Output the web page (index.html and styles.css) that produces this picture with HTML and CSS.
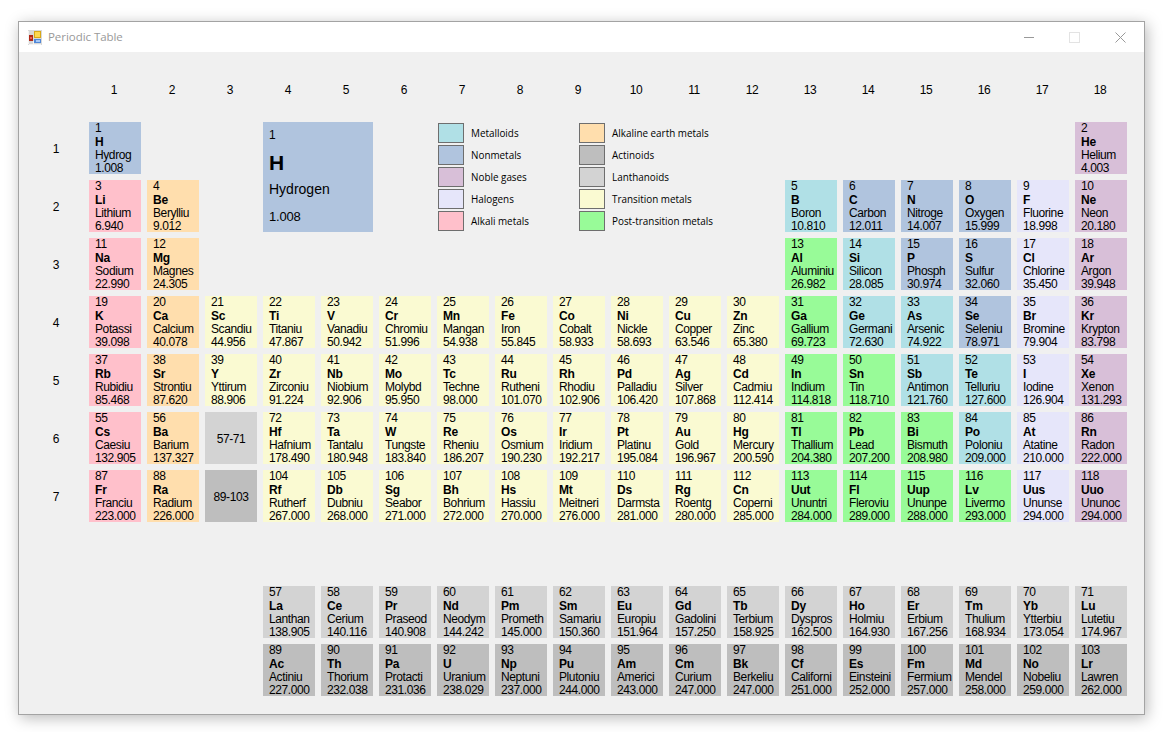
FILE: index.html
```html
<!DOCTYPE html>
<html lang="en">
<head>
	<meta charset="UTF-8">
	<title>Periodic Table</title>
	<link rel="stylesheet" href="styles.css">
</head>
<body>
<div class="window">
	<div class="titlebar">
		<svg class="appicon" width="14" height="15" viewBox="0 0 14 15">
			<rect x="0" y="0" width="14" height="15" fill="#d8d8d8"/>
			<path d="M.5 1v13M5.500 11v3M1 14.500h12" stroke="#f4f4f4" fill="none"/>
			<rect x="6" y="1" width="7" height="7" fill="#d8a818"/>
			<rect x="7" y="2" width="5" height="5" fill="#fcd850"/>
			<rect x="1" y="5" width="4" height="6" fill="#b02818"/>
			<rect x="2" y="7" width="2" height="2" fill="#e86050"/>
			<rect x="6" y="9" width="7" height="4" fill="#5088d8"/>
			<rect x="8" y="10" width="4" height="2" fill="#a8c8f4"/>
		</svg>
		<span class="title">Periodic Table</span>
		<div class="controls">
			<svg width="10" height="10" viewBox="0 0 10 10"><path d="M0 5.5h10" stroke="#999"/></svg>
			<svg width="11" height="11" viewBox="0 0 11 11"><rect x=".5" y=".5" width="10" height="10" fill="none" stroke="#e3e3e3"/></svg>
			<svg width="11" height="11" viewBox="0 0 11 11"><path d="M.5 .5l10 10M10.500 .5l-10 10" stroke="#999"/></svg>
		</div>
	</div>
	<div class="table">
		<div class="hd c2">1</div><div class="hd">2</div><div class="hd">3</div><div class="hd">4</div><div class="hd">5</div><div class="hd">6</div><div class="hd">7</div><div class="hd">8</div><div class="hd">9</div><div class="hd">10</div><div class="hd">11</div><div class="hd">12</div><div class="hd">13</div><div class="hd">14</div><div class="hd">15</div><div class="hd">16</div><div class="hd">17</div><div class="hd">18</div>

		<div class="big nm"><span>1</span><b>H</b><span class="bigname">Hydrogen</span><span class="bigmass">1.008</span></div>

		<div class="legend">
			<ul class="leglist">
				<li><i class="mo"></i>Metalloids</li>
				<li><i class="nm"></i>Nonmetals</li>
				<li><i class="ng"></i>Noble gases</li>
				<li><i class="ha"></i>Halogens</li>
				<li><i class="am"></i>Alkali metals</li>
			</ul>
			<ul class="leglist">
				<li><i class="ae"></i>Alkaline earth metals</li>
				<li><i class="ac"></i>Actinoids</li>
				<li><i class="la"></i>Lanthanoids</li>
				<li><i class="tm"></i>Transition metals</li>
				<li><i class="pt"></i>Post-transition metals</li>
			</ul>
		</div>

		<div class="rl">1</div>
		<div class="el nm"><span>1</span><b>H</b><span>Hydrog</span><span>1.008</span></div>
		<div class="el ng c19"><span>2</span><b>He</b><span>Helium</span><span>4.003</span></div>

		<div class="rl">2</div>
		<div class="el am"><span>3</span><b>Li</b><span>Lithium</span><span>6.940</span></div>
		<div class="el ae"><span>4</span><b>Be</b><span>Berylliu</span><span>9.012</span></div>
		<div class="el mo c14"><span>5</span><b>B</b><span>Boron</span><span>10.810</span></div>
		<div class="el nm"><span>6</span><b>C</b><span>Carbon</span><span>12.011</span></div>
		<div class="el nm"><span>7</span><b>N</b><span>Nitroge</span><span>14.007</span></div>
		<div class="el nm"><span>8</span><b>O</b><span>Oxygen</span><span>15.999</span></div>
		<div class="el ha"><span>9</span><b>F</b><span>Fluorine</span><span>18.998</span></div>
		<div class="el ng"><span>10</span><b>Ne</b><span>Neon</span><span>20.180</span></div>

		<div class="rl">3</div>
		<div class="el am"><span>11</span><b>Na</b><span>Sodium</span><span>22.990</span></div>
		<div class="el ae"><span>12</span><b>Mg</b><span>Magnes</span><span>24.305</span></div>
		<div class="el pt c14"><span>13</span><b>Al</b><span>Aluminiu</span><span>26.982</span></div>
		<div class="el mo"><span>14</span><b>Si</b><span>Silicon</span><span>28.085</span></div>
		<div class="el nm"><span>15</span><b>P</b><span>Phosph</span><span>30.974</span></div>
		<div class="el nm"><span>16</span><b>S</b><span>Sulfur</span><span>32.060</span></div>
		<div class="el ha"><span>17</span><b>Cl</b><span>Chlorine</span><span>35.450</span></div>
		<div class="el ng"><span>18</span><b>Ar</b><span>Argon</span><span>39.948</span></div>

		<div class="rl">4</div>
		<div class="el am"><span>19</span><b>K</b><span>Potassi</span><span>39.098</span></div>
		<div class="el ae"><span>20</span><b>Ca</b><span>Calcium</span><span>40.078</span></div>
		<div class="el tm"><span>21</span><b>Sc</b><span>Scandiu</span><span>44.956</span></div>
		<div class="el tm"><span>22</span><b>Ti</b><span>Titaniu</span><span>47.867</span></div>
		<div class="el tm"><span>23</span><b>V</b><span>Vanadiu</span><span>50.942</span></div>
		<div class="el tm"><span>24</span><b>Cr</b><span>Chromiu</span><span>51.996</span></div>
		<div class="el tm"><span>25</span><b>Mn</b><span>Mangan</span><span>54.938</span></div>
		<div class="el tm"><span>26</span><b>Fe</b><span>Iron</span><span>55.845</span></div>
		<div class="el tm"><span>27</span><b>Co</b><span>Cobalt</span><span>58.933</span></div>
		<div class="el tm"><span>28</span><b>Ni</b><span>Nickle</span><span>58.693</span></div>
		<div class="el tm"><span>29</span><b>Cu</b><span>Copper</span><span>63.546</span></div>
		<div class="el tm"><span>30</span><b>Zn</b><span>Zinc</span><span>65.380</span></div>
		<div class="el pt"><span>31</span><b>Ga</b><span>Gallium</span><span>69.723</span></div>
		<div class="el mo"><span>32</span><b>Ge</b><span>Germani</span><span>72.630</span></div>
		<div class="el mo"><span>33</span><b>As</b><span>Arsenic</span><span>74.922</span></div>
		<div class="el nm"><span>34</span><b>Se</b><span>Seleniu</span><span>78.971</span></div>
		<div class="el ha"><span>35</span><b>Br</b><span>Bromine</span><span>79.904</span></div>
		<div class="el ng"><span>36</span><b>Kr</b><span>Krypton</span><span>83.798</span></div>

		<div class="rl">5</div>
		<div class="el am"><span>37</span><b>Rb</b><span>Rubidiu</span><span>85.468</span></div>
		<div class="el ae"><span>38</span><b>Sr</b><span>Strontiu</span><span>87.620</span></div>
		<div class="el tm"><span>39</span><b>Y</b><span>Yttirum</span><span>88.906</span></div>
		<div class="el tm"><span>40</span><b>Zr</b><span>Zirconiu</span><span>91.224</span></div>
		<div class="el tm"><span>41</span><b>Nb</b><span>Niobium</span><span>92.906</span></div>
		<div class="el tm"><span>42</span><b>Mo</b><span>Molybd</span><span>95.950</span></div>
		<div class="el tm"><span>43</span><b>Tc</b><span>Techne</span><span>98.000</span></div>
		<div class="el tm"><span>44</span><b>Ru</b><span>Rutheni</span><span>101.070</span></div>
		<div class="el tm"><span>45</span><b>Rh</b><span>Rhodiu</span><span>102.906</span></div>
		<div class="el tm"><span>46</span><b>Pd</b><span>Palladiu</span><span>106.420</span></div>
		<div class="el tm"><span>47</span><b>Ag</b><span>Silver</span><span>107.868</span></div>
		<div class="el tm"><span>48</span><b>Cd</b><span>Cadmiu</span><span>112.414</span></div>
		<div class="el pt"><span>49</span><b>In</b><span>Indium</span><span>114.818</span></div>
		<div class="el pt"><span>50</span><b>Sn</b><span>Tin</span><span>118.710</span></div>
		<div class="el mo"><span>51</span><b>Sb</b><span>Antimon</span><span>121.760</span></div>
		<div class="el mo"><span>52</span><b>Te</b><span>Telluriu</span><span>127.600</span></div>
		<div class="el ha"><span>53</span><b>I</b><span>Iodine</span><span>126.904</span></div>
		<div class="el ng"><span>54</span><b>Xe</b><span>Xenon</span><span>131.293</span></div>

		<div class="rl">6</div>
		<div class="el am"><span>55</span><b>Cs</b><span>Caesiu</span><span>132.905</span></div>
		<div class="el ae"><span>56</span><b>Ba</b><span>Barium</span><span>137.327</span></div>
		<div class="ref la">57-71</div>
		<div class="el tm"><span>72</span><b>Hf</b><span>Hafnium</span><span>178.490</span></div>
		<div class="el tm"><span>73</span><b>Ta</b><span>Tantalu</span><span>180.948</span></div>
		<div class="el tm"><span>74</span><b>W</b><span>Tungste</span><span>183.840</span></div>
		<div class="el tm"><span>75</span><b>Re</b><span>Rheniu</span><span>186.207</span></div>
		<div class="el tm"><span>76</span><b>Os</b><span>Osmium</span><span>190.230</span></div>
		<div class="el tm"><span>77</span><b>Ir</b><span>Iridium</span><span>192.217</span></div>
		<div class="el tm"><span>78</span><b>Pt</b><span>Platinu</span><span>195.084</span></div>
		<div class="el tm"><span>79</span><b>Au</b><span>Gold</span><span>196.967</span></div>
		<div class="el tm"><span>80</span><b>Hg</b><span>Mercury</span><span>200.590</span></div>
		<div class="el pt"><span>81</span><b>Tl</b><span>Thallium</span><span>204.380</span></div>
		<div class="el pt"><span>82</span><b>Pb</b><span>Lead</span><span>207.200</span></div>
		<div class="el pt"><span>83</span><b>Bi</b><span>Bismuth</span><span>208.980</span></div>
		<div class="el mo"><span>84</span><b>Po</b><span>Poloniu</span><span>209.000</span></div>
		<div class="el ha"><span>85</span><b>At</b><span>Atatine</span><span>210.000</span></div>
		<div class="el ng"><span>86</span><b>Rn</b><span>Radon</span><span>222.000</span></div>

		<div class="rl">7</div>
		<div class="el am"><span>87</span><b>Fr</b><span>Franciu</span><span>223.000</span></div>
		<div class="el ae"><span>88</span><b>Ra</b><span>Radium</span><span>226.000</span></div>
		<div class="ref ac">89-103</div>
		<div class="el tm"><span>104</span><b>Rf</b><span>Rutherf</span><span>267.000</span></div>
		<div class="el tm"><span>105</span><b>Db</b><span>Dubniu</span><span>268.000</span></div>
		<div class="el tm"><span>106</span><b>Sg</b><span>Seabor</span><span>271.000</span></div>
		<div class="el tm"><span>107</span><b>Bh</b><span>Bohrium</span><span>272.000</span></div>
		<div class="el tm"><span>108</span><b>Hs</b><span>Hassiu</span><span>270.000</span></div>
		<div class="el tm"><span>109</span><b>Mt</b><span>Meitneri</span><span>276.000</span></div>
		<div class="el tm"><span>110</span><b>Ds</b><span>Darmsta</span><span>281.000</span></div>
		<div class="el tm"><span>111</span><b>Rg</b><span>Roentg</span><span>280.000</span></div>
		<div class="el tm"><span>112</span><b>Cn</b><span>Coperni</span><span>285.000</span></div>
		<div class="el pt"><span>113</span><b>Uut</b><span>Ununtri</span><span>284.000</span></div>
		<div class="el pt"><span>114</span><b>Fl</b><span>Fleroviu</span><span>289.000</span></div>
		<div class="el pt"><span>115</span><b>Uup</b><span>Ununpe</span><span>288.000</span></div>
		<div class="el pt"><span>116</span><b>Lv</b><span>Livermo</span><span>293.000</span></div>
		<div class="el ha"><span>117</span><b>Uus</b><span>Ununse</span><span>294.000</span></div>
		<div class="el ng"><span>118</span><b>Uuo</b><span>Ununoc</span><span>294.000</span></div>

		<div class="spacer"></div>

		<div class="el la c5"><span>57</span><b>La</b><span>Lanthan</span><span>138.905</span></div>
		<div class="el la"><span>58</span><b>Ce</b><span>Cerium</span><span>140.116</span></div>
		<div class="el la"><span>59</span><b>Pr</b><span>Praseod</span><span>140.908</span></div>
		<div class="el la"><span>60</span><b>Nd</b><span>Neodym</span><span>144.242</span></div>
		<div class="el la"><span>61</span><b>Pm</b><span>Prometh</span><span>145.000</span></div>
		<div class="el la"><span>62</span><b>Sm</b><span>Samariu</span><span>150.360</span></div>
		<div class="el la"><span>63</span><b>Eu</b><span>Europiu</span><span>151.964</span></div>
		<div class="el la"><span>64</span><b>Gd</b><span>Gadolini</span><span>157.250</span></div>
		<div class="el la"><span>65</span><b>Tb</b><span>Terbium</span><span>158.925</span></div>
		<div class="el la"><span>66</span><b>Dy</b><span>Dyspros</span><span>162.500</span></div>
		<div class="el la"><span>67</span><b>Ho</b><span>Holmiu</span><span>164.930</span></div>
		<div class="el la"><span>68</span><b>Er</b><span>Erbium</span><span>167.256</span></div>
		<div class="el la"><span>69</span><b>Tm</b><span>Thulium</span><span>168.934</span></div>
		<div class="el la"><span>70</span><b>Yb</b><span>Ytterbiu</span><span>173.054</span></div>
		<div class="el la"><span>71</span><b>Lu</b><span>Lutetiu</span><span>174.967</span></div>

		<div class="el ac c5"><span>89</span><b>Ac</b><span>Actiniu</span><span>227.000</span></div>
		<div class="el ac"><span>90</span><b>Th</b><span>Thorium</span><span>232.038</span></div>
		<div class="el ac"><span>91</span><b>Pa</b><span>Protacti</span><span>231.036</span></div>
		<div class="el ac"><span>92</span><b>U</b><span>Uranium</span><span>238.029</span></div>
		<div class="el ac"><span>93</span><b>Np</b><span>Neptuni</span><span>237.000</span></div>
		<div class="el ac"><span>94</span><b>Pu</b><span>Plutoniu</span><span>244.000</span></div>
		<div class="el ac"><span>95</span><b>Am</b><span>Americi</span><span>243.000</span></div>
		<div class="el ac"><span>96</span><b>Cm</b><span>Curium</span><span>247.000</span></div>
		<div class="el ac"><span>97</span><b>Bk</b><span>Berkeliu</span><span>247.000</span></div>
		<div class="el ac"><span>98</span><b>Cf</b><span>Californi</span><span>251.000</span></div>
		<div class="el ac"><span>99</span><b>Es</b><span>Einsteini</span><span>252.000</span></div>
		<div class="el ac"><span>100</span><b>Fm</b><span>Fermium</span><span>257.000</span></div>
		<div class="el ac"><span>101</span><b>Md</b><span>Mendel</span><span>258.000</span></div>
		<div class="el ac"><span>102</span><b>No</b><span>Nobeliu</span><span>259.000</span></div>
		<div class="el ac"><span>103</span><b>Lr</b><span>Lawren</span><span>262.000</span></div>
	</div>
</div>
</body>
</html>
```

FILE: styles.css
```css
html,body{margin:0;padding:0;background:#fff;height:732px;overflow:hidden;}
body{padding:21px 0 0 18px;box-sizing:border-box;font-family:"Liberation Sans",Arial,sans-serif;color:#000;}

.window{width:1127px;height:694px;box-sizing:border-box;border:1px solid #a3a3a3;background:#f0f0f0;box-shadow:2px 3px 14px rgba(0,0,0,.28);}

.titlebar{height:30px;background:#fff;display:flex;align-items:center;padding-left:9px;}
.appicon{flex:none;}
.title{margin:0 0 2px 6px;font:11.5px "Open Sans",sans-serif;letter-spacing:-.05px;color:#999;}
.controls{margin-left:auto;display:flex;align-items:center;gap:35px;padding-right:18px;}
.controls svg{display:block;}

.table{display:grid;grid-template-columns:54px repeat(18,52px);grid-template-rows:36px;grid-auto-rows:52px;gap:6px;padding:28px 0 0 10px;font-size:12px;letter-spacing:-.4px;line-height:13px;}

.hd{height:20px;line-height:20px;text-align:center;padding-right:2px;}
.rl{grid-column:1;display:flex;align-items:center;justify-content:center;padding-top:2px;}
.c2{grid-column:2;}
.c5{grid-column:5;}
.c14{grid-column:14;}
.c19{grid-column:19;}

.el{padding-left:6px;overflow:hidden;white-space:nowrap;}
.el span,.el b{display:block;}
.el b{padding-top:1px;margin-bottom:-1px;letter-spacing:-.2px;}
.el b+span{padding-top:1px;}
.ref{display:flex;align-items:center;justify-content:center;padding-top:2px;}
.spacer{grid-column:1/-1;}

.big{grid-column:5/span 2;grid-row:2/span 2;padding-left:6px;line-height:27px;}
.big span,.big b{display:block;}
.big b{font-size:21px;letter-spacing:0;}
.bigname{font-size:14px;letter-spacing:0;}
.bigmass{font-size:13px;letter-spacing:-.2px;}

.legend{grid-column:8/span 6;grid-row:2/span 2;display:flex;padding:1px 0 0 1px;font:9.9px "Open Sans",sans-serif;letter-spacing:0;}
.leglist{list-style:none;margin:0;padding:0;width:141px;}
.leglist li{display:flex;align-items:center;height:20px;margin-bottom:2px;white-space:nowrap;}
.leglist i{flex:none;width:26px;height:20px;box-sizing:border-box;border:1px solid #6e6e6e;margin-right:7px;}

.mo{background:#b0e0e6;}
.nm{background:#b0c4de;}
.ng{background:#d8bfd8;}
.ha{background:#e6e6fa;}
.am{background:#ffc0cb;}
.ae{background:#ffdead;}
.ac{background:#bebebe;}
.la{background:#d3d3d3;}
.tm{background:#fafad2;}
.pt{background:#98fb98;}
```
